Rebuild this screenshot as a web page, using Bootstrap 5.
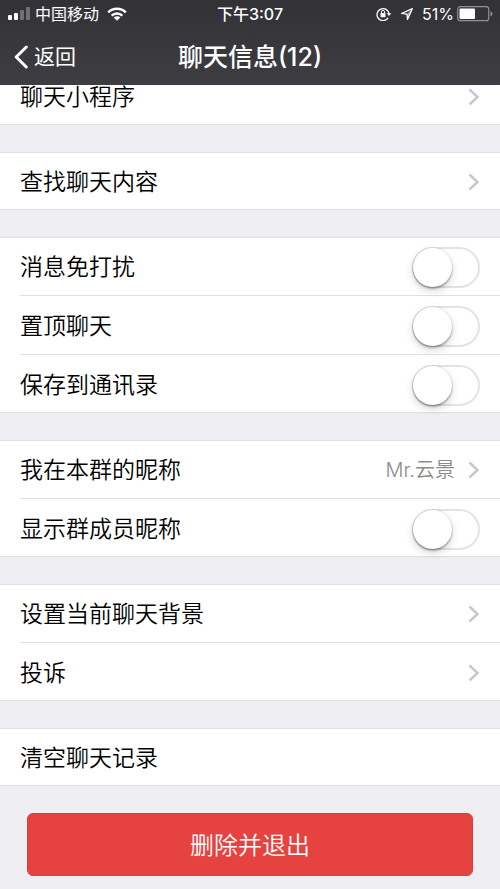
<!DOCTYPE html>
<html lang="zh-CN">
<head>
<meta charset="utf-8">
<meta name="viewport" content="width=device-width, initial-scale=1">
<title>聊天信息</title>
<link href="https://cdn.jsdelivr.net/npm/bootstrap@5.3.0/dist/css/bootstrap.min.css" rel="stylesheet">
<style>
  body { background: #efeef3; color: #000; font-family: Inter, "Noto Sans CJK SC", sans-serif; }
  .top-bar { background: linear-gradient(#323136, #3e3d42); height: 85px; z-index: 1020; }
  .status-bar { height: 28px; padding: 0 7px; font-size: 16px; line-height: 28px; }
  .nav-bar { height: 57px; padding: 0 14px; }
  .side { flex: 1 1 0; }
  .back-link { font-size: 21px; line-height: 32px; gap: 6px; }
  .page-title { font-size: 25px; line-height: 32px; font-weight: 500; }
  .charge { margin: 0 3px 0 8px; }
  .settings { gap: 27px; margin-top: -18px; }
  .group { background: #fff; box-shadow: inset 0 1px #e0e0e3, inset 0 -1px #e0e0e3; padding-left: 20px; }
  .setting { height: 58px; padding: 2px 20px 0 0; font-size: 23px; line-height: 34px; font-weight: 350; color: #000; }
  .setting:hover { color: #000; }
  .split { height: 59px; border-top: 1px solid #e0e0e2; }
  .value { font-size: 20px; color: #8c8c8c; margin-right: 13px; }
  .toggle.form-check-input { width: 68px; height: 41px; margin: 0; border: 2px solid #e3e3e3; border-radius: 21px; background: #fff; }
  .toggle::before { content: ""; display: block; width: 39px; height: 39px; margin: -1px; border-radius: 50%; background: #fff; box-shadow: 0 0 1px 1px rgba(0,0,0,.07), 0 2px 2px rgba(0,0,0,.25), 0 4px 9px rgba(0,0,0,.16); }
  .toggle:checked { background: #4cd964; border-color: #4cd964; }
  .toggle:checked::before { margin-left: 26px; }
  .action { padding: 27px 27px 13px; }
  .quit.btn { --bs-btn-color: #fff; --bs-btn-bg: #e64340; --bs-btn-border-color: #d63f3d; --bs-btn-hover-color: #fff; --bs-btn-hover-bg: #d63c39; height: 63px; padding: 8px 12px 6px; border-radius: 6px; font-size: 24px; line-height: 34px; font-weight: 350; }
</style>
<script src="https://cdn.jsdelivr.net/npm/bootstrap@5.3.0/dist/js/bootstrap.bundle.min.js"></script>
</head>
<body>
<svg class="d-none" aria-hidden="true">
  <symbol id="chevron" viewBox="0 0 12 18"><path d="M1.5 1.5 9.5 9l-8 7.5" fill="none" stroke="#c7c7cb" stroke-width="2.4"/></symbol>
</svg>

<header class="top-bar sticky-top text-white">
  <div class="status-bar d-flex align-items-center">
    <div class="side d-flex align-items-center">
      <svg class="me-1" width="24" height="14" viewBox="0 0 24 14" fill="#fff" aria-hidden="true"><rect x="1" y="8" width="4" height="5" rx="1"/><rect x="7" y="6" width="4" height="7" rx="1"/><rect x="13" y="3" width="4" height="10" rx="1" opacity=".3"/><rect x="19" y="0" width="4" height="13" rx="1" opacity=".3"/></svg>
      <span>中国移动</span>
      <svg class="ms-2" width="20" height="14" viewBox="0 0 20 14" aria-label="Wi-Fi"><g fill="none" stroke="#fff" stroke-width="2.4"><path d="M1.2 5.3a12.6 12.6 0 0 1 17.6 0"/><path d="M4.6 8.6a7.8 7.8 0 0 1 10.8 0"/></g><path d="M10 13.8 6.7 10.6a4.7 4.7 0 0 1 6.6 0z" fill="#fff"/></svg>
    </div>
    <span class="fw-medium">下午3:07</span>
    <div class="side d-flex align-items-center justify-content-end">
      <svg width="16" height="14" viewBox="0 0 16 14" aria-hidden="true"><path d="M12.1 10.8A6 6 0 1 1 13 7" fill="none" stroke="#fff" stroke-width="1.3"/><path d="M10.8 6.3h4.5L13 9z" fill="#fff"/><rect x="4.5" y="6" width="5" height="4.2" rx=".6" fill="#fff"/><path d="M5.4 6.2V5a1.6 1.6 0 0 1 3.2 0v1.2" fill="none" stroke="#fff" stroke-width="1"/></svg>
      <svg class="ms-2" width="14" height="14" viewBox="0 0 14 14" aria-hidden="true"><path d="M12.4 1.6 1.5 6.5l5.4.6.6 5.4z" fill="none" stroke="#fff" stroke-width="1.2" stroke-linejoin="round"/><path d="m12.4 1.6-5.5 5.5.6 5.4z" fill="#fff" opacity=".5"/></svg>
      <span class="charge">51%</span>
      <svg width="36" height="16" viewBox="0 0 36 16" aria-hidden="true"><rect x=".7" y=".7" width="31" height="14" rx="2.5" fill="none" stroke="#929196" stroke-width="1.2"/><rect x="2.5" y="2.5" width="15.5" height="10.5" rx="1" fill="#fff"/><path d="M33.5 5.2q2 .5 2 2.5t-2 2.5z" fill="#929196"/></svg>
    </div>
  </div>
  <nav class="nav-bar d-flex align-items-center">
    <div class="side d-flex">
      <a href="#" class="back-link d-flex align-items-center text-white text-decoration-none"><svg width="14" height="24" viewBox="0 0 14 24" aria-hidden="true"><path d="M12.3 2 2.2 12l10.1 10" fill="none" stroke="#fff" stroke-width="3" stroke-linecap="round" stroke-linejoin="round"/></svg>返回</a>
    </div>
    <h1 class="page-title m-0">聊天信息(12)</h1>
    <div class="side"></div>
  </nav>
</header>

<main>
  <div class="settings d-flex flex-column">
    <section class="group">
      <a href="#" class="setting d-flex align-items-center justify-content-between text-decoration-none">聊天小程序<svg width="12" height="18"><use href="#chevron"/></svg></a>
    </section>
    <section class="group">
      <a href="#" class="setting d-flex align-items-center justify-content-between text-decoration-none">查找聊天内容<svg width="12" height="18"><use href="#chevron"/></svg></a>
    </section>
    <section class="group">
      <div class="setting d-flex align-items-center justify-content-between"><label for="mute">消息免打扰</label><input class="form-check-input toggle" type="checkbox" role="switch" id="mute"></div>
      <div class="setting split d-flex align-items-center justify-content-between"><label for="pin">置顶聊天</label><input class="form-check-input toggle" type="checkbox" role="switch" id="pin"></div>
      <div class="setting split d-flex align-items-center justify-content-between"><label for="save">保存到通讯录</label><input class="form-check-input toggle" type="checkbox" role="switch" id="save"></div>
    </section>
    <section class="group">
      <a href="#" class="setting d-flex align-items-center text-decoration-none"><span class="me-auto">我在本群的昵称</span><span class="value">Mr.云景</span><svg width="12" height="18"><use href="#chevron"/></svg></a>
      <div class="setting split d-flex align-items-center justify-content-between"><label for="names">显示群成员昵称</label><input class="form-check-input toggle" type="checkbox" role="switch" id="names"></div>
    </section>
    <section class="group">
      <a href="#" class="setting d-flex align-items-center justify-content-between text-decoration-none">设置当前聊天背景<svg width="12" height="18"><use href="#chevron"/></svg></a>
      <a href="#" class="setting split d-flex align-items-center justify-content-between text-decoration-none">投诉<svg width="12" height="18"><use href="#chevron"/></svg></a>
    </section>
    <section class="group">
      <a href="#" class="setting d-flex align-items-center text-decoration-none">清空聊天记录</a>
    </section>
  </div>
  <div class="action"><button type="button" class="quit btn w-100">删除并退出</button></div>
</main>
</body>
</html>
